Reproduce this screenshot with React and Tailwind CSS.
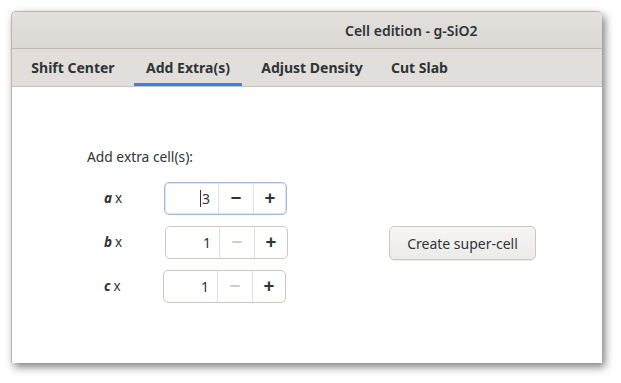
import { useState } from 'react'

const font = { fontFamily: '"Noto Sans", "Open Sans", sans-serif' }

function SpinRow({ axis, value, focused, minusDisabled, shift }) {
  return (
    <div className="flex items-center h-[33px]">
      <div className="w-[76px] pl-[17px] text-[13.5px] text-[#2e3436]">
        <span className="font-bold italic">{axis}</span>
        <span className="ml-[3px]">x</span>
      </div>
      <div
        className={`${shift} flex h-[33px] w-[123px] rounded-[5px] border bg-white ${
          focused ? 'border-[#9fbce0] shadow-[inset_0_0_0_1px_#dbe6f5]' : 'border-[#cdc7c2]'
        }`}
      >
        <div className="flex w-[53px] items-center justify-end pr-[8px] text-[14px] text-[#2e3436]">
          {focused && <span className="mr-[1px] h-[17px] w-px bg-[#2e3436]" />}
          {value}
        </div>
        <div
          className={`flex w-[35px] items-center justify-center border-l border-[#e3dfdb] text-[19px] font-bold leading-none ${
            minusDisabled ? 'text-[#d0ccc8]' : 'text-[#2e3436]'
          }`}
        >
          −
        </div>
        <div className="flex flex-1 items-center justify-center border-l border-[#e3dfdb] text-[19px] font-bold leading-none text-[#2e3436]">
          +
        </div>
      </div>
    </div>
  )
}

export default function App() {
  const [tab] = useState('extra')
  const tabs = [
    { key: 'shift', label: 'Shift Center', cls: 'ml-[9px] w-[104px]' },
    { key: 'extra', label: 'Add Extra(s)', cls: 'ml-[9px] w-[108px]' },
    { key: 'density', label: 'Adjust Density', cls: 'ml-[8px] w-[124px]' },
    { key: 'slab', label: 'Cut Slab', cls: 'ml-[6px] w-[79px]' },
  ]

  return (
    <div className="h-[383px] w-[621px] bg-white pl-[11px] pt-[11px]" style={font}>
      <div className="flex h-[352px] w-[591px] flex-col overflow-hidden rounded-t-[5px] border-l border-t border-[#b9b4ae] bg-white shadow-[3px_4px_8px_rgba(0,0,0,0.5)]">
        {/* title bar */}
        <div className="flex h-[37px] shrink-0 items-center border-b border-[#c0b9b2] bg-gradient-to-b from-[#e3e0dd] to-[#dcd8d4]">
          <div className="ml-[333px] text-[14px] font-semibold text-[#2e3436]">Cell edition - g-SiO2</div>
        </div>

        {/* tabs */}
        <div className="flex h-[38px] shrink-0 border-b border-[#c8c2bc] bg-[#e1dedb]">
          {tabs.map(t => (
            <div
              key={t.key}
              className={`${t.cls} flex items-center justify-center border-b-[3px] text-[14px] font-bold text-[#2e3436] ${
                tab === t.key ? 'border-[#3584e4]' : 'border-transparent'
              }`}
            >
              <span className="mt-[3px]">{t.label}</span>
            </div>
          ))}
        </div>

        {/* content */}
        <div className="flex flex-1 pl-[75px] pt-[60px]">
          <div className="flex flex-col">
            <div className="mb-[15px] text-[13.8px] leading-[20px] text-[#2e3436]">Add extra cell(s):</div>
            <div className="flex flex-col gap-[11px]">
              <SpinRow axis="a" value="3" focused minusDisabled={false} shift="ml-[1px]" />
              <SpinRow axis="b" value="1" minusDisabled shift="ml-[2px]" />
              <SpinRow axis="c" value="1" minusDisabled shift="ml-0" />
            </div>
          </div>
          <div className="ml-[101px] mt-[79px]">
            <button className="h-[34px] w-[147px] rounded-[5px] border border-[#cdc7c2] bg-gradient-to-b from-[#f6f5f4] to-[#edebe9] text-[14px] text-[#2e3436] shadow-[0_1px_0_rgba(0,0,0,0.07)]">
              Create super-cell
            </button>
          </div>
        </div>
      </div>
    </div>
  )
}
